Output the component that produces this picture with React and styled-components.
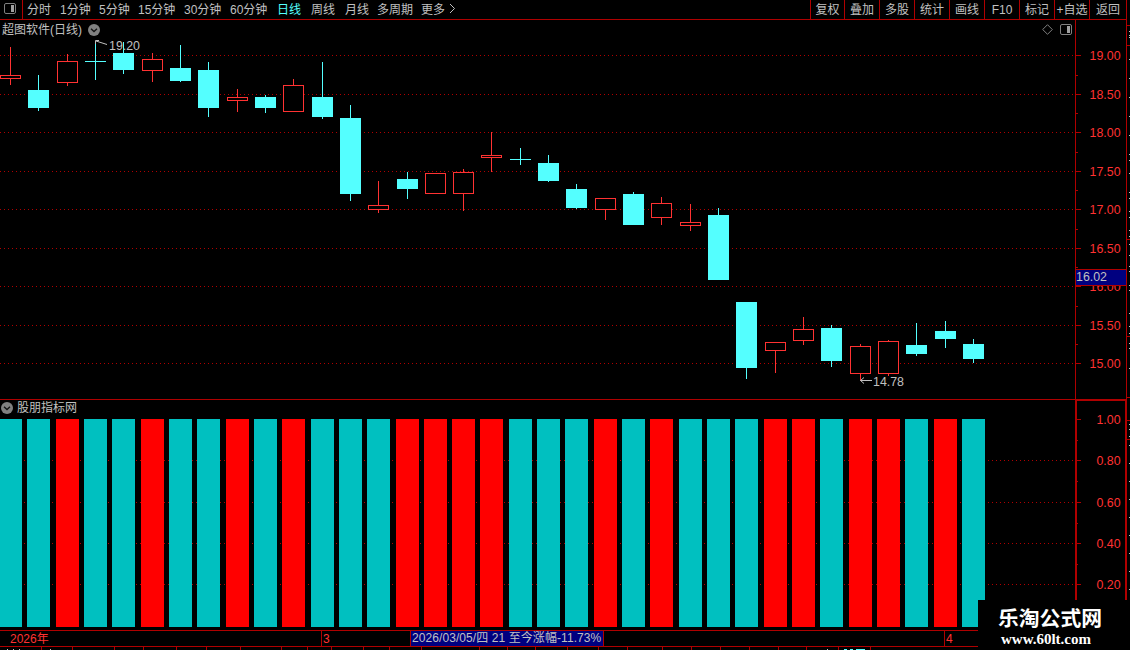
import React from 'react'
import styled, { createGlobalStyle } from 'styled-components'

const LINE = '#b00000'
const RED = '#ff3232'
const CYAN = '#54ffff'
const TEAL = '#00c0c0'
const GREY = '#c0c0c0'

const GlobalStyle = createGlobalStyle`
  body {
    margin: 0;
    background: #000;
    overflow: hidden;
  }
  * {
    box-sizing: border-box;
  }
  svg {
    display: block;
    flex: none;
  }
`

const Screen = styled.div`
  position: relative;
  display: flex;
  width: 1130px;
  height: 650px;
  overflow: hidden;
  background: #000;
  color: ${GREY};
  font-family: "Liberation Sans", "Noto Sans CJK SC", sans-serif;
  font-size: 12px;
  line-height: 18px;
  white-space: nowrap;

  svg text {
    font-size: 12.4px;
  }
`

const Main = styled.div`
  display: flex;
  flex-direction: column;
  width: 1126px;
`

const Toolbar = styled.div`
  display: flex;
  height: 20px;
  border-bottom: 1px solid ${LINE};
  line-height: 20px;
`

const LayoutToggle = styled.div`
  width: 23px;
  padding: 3px 0 0 4px;
  border-right: 1px solid ${LINE};
`

const Periods = styled.div`
  display: flex;
  flex: 1;
  padding-left: 4px;
`

const Period = styled.span`
  width: ${({ $width }) => $width}px;
  color: ${({ $active }) => ($active ? CYAN : GREY)};
`

const Tools = styled.div`
  display: flex;
`

const Tool = styled.span`
  width: ${({ $width }) => $width || 35}px;
  border-left: 1px solid ${LINE};
  text-align: center;
`

const Panel = styled.div`
  display: flex;
  height: ${({ $height }) => $height}px;
`

const PricePanel = styled(Panel)`
  border-bottom: 1px solid ${LINE};
`

const Plot = styled.div`
  width: 1075px;
`

const PanelHead = styled.div`
  display: flex;
  align-items: center;
  gap: ${({ $gap }) => $gap}px;
  height: ${({ $height }) => $height}px;
  padding: 0 3px 0 ${({ $indent }) => $indent}px;
`

const HeadTools = styled.div`
  display: flex;
  align-items: center;
  gap: 6px;
  margin-left: auto;
`

const Axis = styled.div`
  position: relative;
  width: 51px;
  border-left: 1px solid ${LINE};
`

const BoxedAxis = styled(Axis)`
  border: solid ${LINE};
  border-width: 1px 1px 0 2px;
`

const PriceBadge = styled.div`
  position: absolute;
  top: 249px;
  left: 0;
  width: 50px;
  height: 17px;
  border: solid ${LINE};
  border-width: 1px 0;
  background: #000080;
  font-size: 12.4px;
  line-height: 15px;
`

const TimeAxis = styled.div`
  position: relative;
  display: flex;
  width: 978px;
  height: 17px;
  border: solid ${LINE};
  border-width: 1px 0;
  color: ${RED};
  line-height: 16px;
`

const Month = styled.div`
  width: ${({ $width }) => $width}px;
  padding-left: ${({ $first }) => ($first ? 10 : 1)}px;
  border-left: ${({ $first }) => ($first ? 0 : 1)}px solid ${LINE};
`

const DateBadge = styled.div`
  position: absolute;
  top: -1px;
  left: 410px;
  width: 194px;
  height: 17px;
  padding-left: 1px;
  border: 1px solid ${LINE};
  background: #000080;
  color: ${GREY};
  line-height: 15px;
  letter-spacing: 0.08px;
`

const Watermark = styled.div`
  position: absolute;
  right: 0;
  bottom: 0;
  width: 152px;
  height: 50px;
  padding: 5px 0 0 20px;
  background: #000;
  color: #fff;
`

const SiteName = styled.div`
  font: bold 20.8px/26px "Noto Sans CJK SC", sans-serif;
  height: 26px;
  margin-top: -1px;
`

const SiteUrl = styled.div`
  padding: 1px 0 0 3px;
  font: bold 15px/16px "Liberation Serif", serif;
`

const periods = [
  ['分时', 33],
  ['1分钟', 39],
  ['5分钟', 39],
  ['15分钟', 46],
  ['30分钟', 46],
  ['60分钟', 47],
  ['日线', 34],
  ['周线', 34],
  ['月线', 32],
  ['多周期', 44],
  ['更多', 27],
]

const tools = ['复权', '叠加', '多股', '统计', '画线', 'F10', '标记', '+自选', '返回']

// centre x, high, body top, body bottom, low, rising, signal
const candles = [
  [10, 47, 75, 79, 85, 1, 0],
  [38, 75, 90, 108, 111, 0, 0],
  [67, 54, 61, 83, 86, 1, 1],
  [95, 41, 61, 62, 80, 0, 0],
  [123, 42, 53, 70, 74, 0, 0],
  [152, 53, 59, 71, 82, 1, 1],
  [180, 45, 68, 81, 82, 0, 0],
  [208, 62, 70, 108, 117, 0, 0],
  [237, 89, 97, 101, 112, 1, 1],
  [265, 95, 97, 108, 113, 0, 0],
  [293, 79, 85, 112, 112, 1, 1],
  [322, 62, 97, 117, 119, 0, 0],
  [350, 105, 118, 194, 201, 0, 0],
  [378, 181, 205, 210, 213, 1, 0],
  [407, 172, 179, 189, 199, 0, 1],
  [435, 173, 173, 194, 194, 1, 1],
  [463, 169, 172, 194, 211, 1, 1],
  [491, 132, 155, 158, 172, 1, 1],
  [520, 148, 159, 160, 165, 0, 0],
  [548, 155, 163, 181, 182, 0, 0],
  [576, 184, 189, 208, 209, 0, 0],
  [605, 198, 198, 210, 220, 1, 1],
  [633, 192, 194, 225, 225, 0, 0],
  [661, 197, 203, 218, 225, 1, 1],
  [690, 204, 222, 226, 231, 1, 0],
  [718, 208, 215, 280, 280, 0, 0],
  [746, 302, 302, 368, 379, 0, 0],
  [775, 342, 342, 351, 373, 1, 1],
  [803, 317, 329, 341, 345, 1, 1],
  [831, 325, 328, 361, 367, 0, 0],
  [860, 344, 346, 374, 381, 1, 1],
  [888, 340, 341, 374, 376, 1, 1],
  [916, 323, 345, 354, 356, 0, 0],
  [945, 321, 331, 339, 348, 0, 1],
  [973, 339, 344, 359, 363, 0, 0],
]

const priceScale = [
  ['19.00', 55], ['18.50', 94], ['18.00', 132], ['17.50', 171], ['17.00', 209],
  ['16.50', 248], ['16.00', 286], ['15.50', 325], ['15.00', 363],
]
const priceMinor = [75, 113, 152, 190, 229, 267, 306, 344]

const signalScale = [['1.00', 419], ['0.80', 460], ['0.60', 502], ['0.40', 543], ['0.20', 584]]
const signalMinor = [440, 481, 523, 564]

const bottomTicks = [
  41, 72, 114, 143, 176, 206, 240, 281, 307, 331, 363, 389, 421, 479, 507, 535,
  567, 598, 627, 662, 691, 720, 749, 778, 806, 838, 870,
]
const sideTicks = [25, 45, 239, 336, 397, 420, 439]
const sideMarks = [
  31, 35, 37, 59, 78, 97, 116, 135, 154, 160, 173, 192, 198, 211, 217, 230, 236,
  244, 255, 266, 271, 285, 290, 313, 326, 333, 343, 348, 368, 424, 429, 436, 445,
  463, 481, 499, 517, 535, 553, 571, 589,
]

const SplitIcon = () => (
  <svg width="12" height="11" viewBox="0 0 12 11" fill="none">
    <rect x="0.5" y="0.5" width="11" height="10" rx="1.5" stroke="#808080" />
    <rect x="7" y="2" width="3" height="7" fill="#a0a0a0" />
  </svg>
)

const FoldIcon = () => (
  <svg width="12" height="12" viewBox="0 0 12 12">
    <circle cx="6" cy="6" r="6" fill="#808080" />
    <path d="M3 4.8 6 7.6 9 4.8" fill="none" stroke="#111" strokeWidth="1.3" />
  </svg>
)

const GridLines = ({ rows }) =>
  rows.map(y => (
    <line key={y} x1="0" x2="1075" y1={y + 0.5} y2={y + 0.5} stroke={LINE} strokeDasharray="1 3" />
  ))

const Candle = ({ data: [x, high, top, bottom, low, rising] }) => (
  <g fill={rising ? RED : CYAN}>
    <rect x={x} y={high} width="1" height={low - high} />
    {rising ? (
      <rect x={x - 9.5} y={top + 0.5} width="20" height={bottom - top - 1} fill="#000" stroke={RED} />
    ) : (
      <rect x={x - 10} y={top} width="21" height={bottom - top} />
    )}
  </g>
)

const Scale = ({ top, height, left, major, minor }) => (
  <svg width={1125 - left} height={height} viewBox={`${left} ${top} ${1125 - left} ${height}`}>
    <g fill={LINE}>
      {major.map(([, y]) => <rect key={y} x={left} y={y} width={1081 - left} height="1" />)}
      {minor.map(y => <rect key={y} x={left} y={y} width={1078 - left} height="1" />)}
    </g>
    <g fill={RED} textAnchor="end">
      {major.map(([label, y]) => <text key={label} x="1120.6" y={y + 5}>{label}</text>)}
    </g>
  </svg>
)

export default function App() {
  return (
    <Screen>
      <GlobalStyle />
      <Main>
        <Toolbar>
          <LayoutToggle><SplitIcon /></LayoutToggle>
          <Periods>
            {periods.map(([label, width]) => (
              <Period key={label} $width={width} $active={label === '日线'}>{label}</Period>
            ))}
            <svg width="8" height="19" viewBox="0 0 8 19" fill="none">
              <path d="M2 4 6.5 8.5 2 13" stroke={GREY} />
            </svg>
          </Periods>
          <Tools>
            {tools.map((label, i) => (
              <Tool key={label} $width={i === 0 ? 34 : i === 8 ? 37 : 35}>{label}</Tool>
            ))}
          </Tools>
        </Toolbar>

        <PricePanel $height={380}>
          <Plot>
            <PanelHead $height={19} $gap={6} $indent={2}>
              <span>超图软件(日线)</span>
              <FoldIcon />
              <HeadTools>
                <svg width="12" height="12" viewBox="0 0 12 12">
                  <path d="M5.5 .7 10.3 5.5 5.5 10.3 .7 5.5Z" fill="none" stroke="#808080" />
                </svg>
                <SplitIcon />
              </HeadTools>
            </PanelHead>
            <svg width="1075" height="360" viewBox="0 39 1075 360">
              <g shapeRendering="crispEdges">
                <GridLines rows={priceScale.map(([, y]) => y)} />
                {candles.map(c => <Candle key={c[0]} data={c} />)}
              </g>
              <g fill="none" stroke={GREY}>
                <path d="M99 40.5H95.5V44M96 41 107 44.5" />
                <path d="M872 380.5H860.5M864 377.5 860.5 380.5 864 383.5" />
              </g>
              <g fill={GREY}>
                <text x="109" y="50">19.20</text>
                <text x="873" y="386">14.78</text>
              </g>
            </svg>
          </Plot>
          <Axis>
            <Scale left={1076} top={20} height={379} major={priceScale} minor={priceMinor} />
            <PriceBadge>16.02</PriceBadge>
          </Axis>
        </PricePanel>

        <Panel $height={230}>
          <Plot>
            <PanelHead $height={16} $gap={4} $indent={1}>
              <FoldIcon />
              <span>股朋指标网</span>
            </PanelHead>
            <svg width="1075" height="214" viewBox="0 416 1075 214" shapeRendering="crispEdges">
              <GridLines rows={[460, 502, 543, 584]} />
              {candles.map(([x, , , , , , signal]) => (
                <rect key={x} x={x - 11} y="419" width="23" height="208" fill={signal ? '#f00' : TEAL} />
              ))}
            </svg>
          </Plot>
          <BoxedAxis>
            <Scale left={1077} top={401} height={229} major={signalScale} minor={signalMinor} />
          </BoxedAxis>
        </Panel>

        <TimeAxis>
          <Month $first $width={321}>2026年</Month>
          <Month $width={623}>3</Month>
          <Month $width={34}>4</Month>
          <DateBadge>2026/03/05/四 21 至今涨幅-11.73%</DateBadge>
        </TimeAxis>
        <svg width="1126" height="3" viewBox="0 647 1126 3">
          <g fill={LINE}>
            {bottomTicks.map(x => <rect key={x} x={x} y="647" width="1" height="3" />)}
          </g>
          <g fill={GREY}>
            {[7, 13, 19, 50, 827].map(x => <rect key={x} x={x} y="649" width="1" height="1" />)}
          </g>
          <path d="M844 649.5h3m3 0h3m3 0h9" stroke={CYAN} />
        </svg>
      </Main>

      <svg width="4" height="650" viewBox="1126 0 4 650">
        <rect x="1126" y="0" width="1" height="650" fill={LINE} />
        {sideTicks.map(y => <rect key={y} x="1127" y={y} width="3" height="1" fill={LINE} />)}
        {sideMarks.map(y => <rect key={y} x="1129" y={y} width="1" height="1" fill={GREY} />)}
      </svg>

      <Watermark>
        <SiteName>乐淘公式网</SiteName>
        <SiteUrl>www.60lt.com</SiteUrl>
      </Watermark>
    </Screen>
  )
}
